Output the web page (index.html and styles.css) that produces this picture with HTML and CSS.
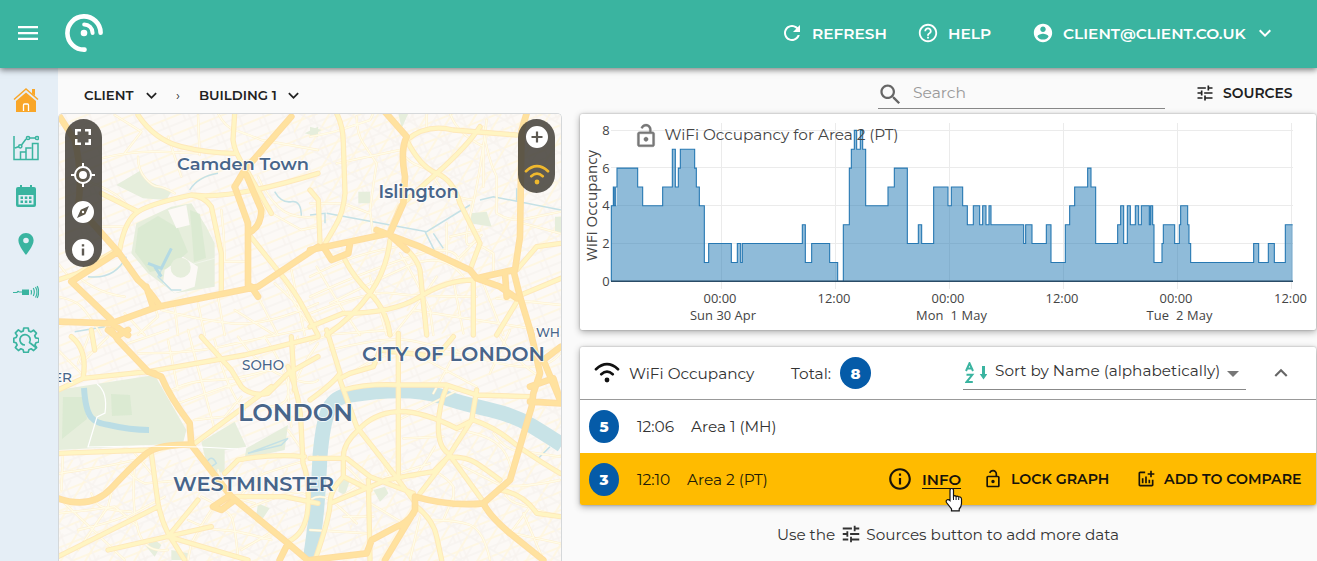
FILE: index.html
```html
<!DOCTYPE html>
<html lang="en">
<head>
<meta charset="utf-8">
<title>Building dashboard</title>
<link rel="stylesheet" href="styles.css">
</head>
<body>
<svg class="sprite" width="0" height="0">
  <symbol id="i-down" viewBox="0 0 24 24"><path d="M7.41 8.59 12 13.17l4.59-4.58L18 10l-6 6-6-6z"/></symbol>
  <symbol id="i-tune" viewBox="0 0 24 24"><path d="M3 17v2h6v-2H3zM3 5v2h10V5H3zm10 16v-2h8v-2h-8v-2h-2v6h2zM7 9v2H3v2h4v2h2V9H7zm14 4v-2H11v2h10zm-6-4h2V7h4V5h-4V3h-2v6z"/></symbol>
  <symbol id="i-lock" viewBox="0 0 24 24"><path d="M18 8h-1V6c0-2.760-2.240-5-5-5-2.300 0-4.200 1.500-4.800 3.500l1.900.6C9.500 3.900 10.600 3 12 3c1.660 0 3 1.340 3 3v2H6c-1.100 0-2 .9-2 2v10c0 1.100.9 2 2 2h12c1.100 0 2-.9 2-2V10c0-1.100-.9-2-2-2zm0 12H6V10h12v10zm-6-3c1.100 0 2-.9 2-2s-.9-2-2-2-2 .9-2 2 .9 2 2 2z"/></symbol>
  <symbol id="i-wifi" viewBox="0 0 26 22"><g fill="none" stroke="currentColor" stroke-width="2.700" stroke-linecap="round"><path d="M2 7.200Q13-2.800 24 7.200M7.300 12.200Q13 7 18.700 12.200"/></g><circle cx="13" cy="18" r="2.400"/></symbol>
</svg>

<header class="topbar">
  <svg class="menu" viewBox="0 0 20 14"><path d="M0 0h20v2.200H0zM0 6h20v2.200H0zM0 11.800h20V14H0z"/></svg>
  <svg class="logo" viewBox="0 0 38 38"><g fill="none" stroke="#fff" stroke-linecap="round"><path stroke-width="4.600" d="M19.500 35.600A16.600 16.600 0 1 1 35.600 18.700"/><path stroke-width="4" d="M19.200 10.500A8.400 8.400 0 0 1 27.600 18.900"/></g><circle cx="19" cy="19" r="3.300"/></svg>
  <nav class="account">
    <a class="top-link refresh"><svg viewBox="0 0 24 24"><path d="M17.650 6.350C16.200 4.900 14.210 4 12 4c-4.420 0-7.990 3.580-7.990 8s3.570 8 7.990 8c3.730 0 6.840-2.550 7.730-6h-2.080c-.82 2.330-3.040 4-5.650 4-3.310 0-6-2.690-6-6s2.690-6 6-6c1.660 0 3.140.69 4.220 1.780L13 11h7V4l-2.350 2.350z"/></svg><span>REFRESH</span></a>
    <a class="top-link help"><svg viewBox="0 0 24 24"><path d="M11 18h2v-2h-2v2zm1-16C6.480 2 2 6.480 2 12s4.480 10 10 10 10-4.480 10-10S17.520 2 12 2zm0 18c-4.410 0-8-3.590-8-8s3.590-8 8-8 8 3.590 8 8-3.590 8-8 8zm0-14c-2.210 0-4 1.790-4 4h2c0-1.100.9-2 2-2s2 .9 2 2c0 2-3 1.750-3 5h2c0-2.250 3-2.500 3-5 0-2.210-1.790-4-4-4z"/></svg><span>HELP</span></a>
    <a class="top-link user"><svg viewBox="0 0 24 24"><path d="M12 2C6.480 2 2 6.480 2 12s4.480 10 10 10 10-4.480 10-10S17.520 2 12 2zm0 3c1.660 0 3 1.340 3 3s-1.340 3-3 3-3-1.340-3-3 1.340-3 3-3zm0 14.200c-2.500 0-4.710-1.280-6-3.220.03-1.990 4-3.080 6-3.080 1.990 0 5.970 1.090 6 3.080-1.290 1.940-3.500 3.220-6 3.220z"/></svg><span>CLIENT@CLIENT.CO.UK</span><svg class="caret"><use href="#i-down"/></svg></a>
  </nav>
</header>

<div class="shell">
  <aside class="rail">
    <svg class="home" viewBox="0 0 26 26"><path d="M3 14 13 5.500 23 14v11H3z"/><path d="M1 12.500 13 2l12 10.500" fill="none" stroke="currentColor" stroke-width="1.500"/><path d="M19 2h3v7l-3-2.500z"/><path d="M10.500 24v-6q0-1 1-1h3q1 0 1 1v6" fill="none" stroke="#fff" stroke-width="1.300"/></svg>
    <svg viewBox="0 0 26 26"><g fill="none" stroke="currentColor" stroke-width="1.500"><path d="M1 1v23.500h24V8.500h-5.500v16M7.500 24V17H13v7M13 24V13h5.500M2 13l4-1.500M8.500 10 13 4M17 3h5"/><circle cx="7.300" cy="11.300" r="1.600"/><circle cx="15" cy="3" r="1.600"/><circle cx="24" cy="3" r="1.600"/></g></svg>
    <svg viewBox="0 0 26 26"><path d="M5 4h2V2h2v2h8V2h2v2h2q2 0 2 2v4H3V6q0-2 2-2z"/><path fill-rule="evenodd" d="M3 9.500h20V22q0 2-2 2H5q-2 0-2-2zm2.500 2.500v9.500h15V12z"/><path d="M7.500 13.500H10V16H7.500zM11.800 13.500h2.500V16h-2.500zM16 13.500h2.500V16H16zM7.500 17.500H10V20H7.500zM11.800 17.500h2.500V20h-2.500zM16 17.500h2.500V20H16z"/></svg>
    <svg viewBox="0 0 26 26"><path fill-rule="evenodd" d="M13 2c-4.300 0-7.600 3.400-7.600 7.500C5.400 15 13 24 13 24s7.600-9 7.600-14.500C20.600 5.400 17.300 2 13 2zm0 4.700a2.800 2.800 0 1 1 0 5.600 2.800 2.800 0 0 1 0-5.600z"/></svg>
    <svg viewBox="0 0 26 26"><path d="M9 10.500h7v5.500H9z"/><g fill="none" stroke="currentColor" stroke-width="1.200"><path d="M0 13.500h4q1-2 2-.5h4M18 11q1 2 0 4.500M20.300 9q2 4 0 8M22.500 8q3 5 0 10.500M24.200 7q3 6 0 12"/></g></svg>
    <svg viewBox="0 0 26 26"><g fill="none" stroke="currentColor" stroke-width="1.700" stroke-linejoin="round"><path d="M10.800 1h4.400l.6 3 2.200.9 2.500-1.700 2.900 3-1.700 2.500.9 2.100 3.300.7v3.500l-3 .8-1 2.300 1.700 2.500-3 2.900-2.500-1.700-2.200.9-.7 2.700h-4.400l-.7-2.700-2.200-.9-2.500 1.700-3-2.900 1.700-2.500-1-2.300-2.300-.6v-4l2.400-.7.9-2.100-1.700-2.500 3-3L8 4.900l2.200-.9z"/><path d="m23.500 21-7-5.500A5.200 5.200 0 1 0 12 18"/></g></svg>
  </aside>

  <main>
    <div class="toolbar">
      <div class="crumb client"><span>CLIENT</span><svg><use href="#i-down"/></svg></div>
      <span class="sep">›</span>
      <div class="crumb building"><span>BUILDING 1</span><svg><use href="#i-down"/></svg></div>
      <div class="search"><svg viewBox="0 0 24 24"><path d="M15.500 14h-.79l-.28-.27C15.410 12.590 16 11.110 16 9.500 16 5.910 13.090 3 9.500 3S3 5.910 3 9.500 5.910 16 9.500 16c1.610 0 3.090-.59 4.230-1.570l.27.28v.79l5 4.990L20.490 19l-4.990-5zm-6 0C7.010 14 5 11.990 5 9.500S7.010 5 9.500 5 14 7.010 14 9.500 11.990 14 9.500 14z"/></svg><span>Search</span></div>
      <div class="sources"><svg><use href="#i-tune"/></svg><span>SOURCES</span></div>
    </div>

    <div class="content">
      <section class="map">
        <svg class="map-art" viewBox="58 114 504 447">
          <defs>
            <pattern id="streets-a" width="23" height="17" patternUnits="userSpaceOnUse" patternTransform="rotate(-22)"><path class="street-y" d="M0 3h23"/><path class="street-g" d="M0 11h23M17 0v17M12 3v8"/></pattern>
            <pattern id="streets-b" width="21" height="25" patternUnits="userSpaceOnUse" patternTransform="rotate(31)"><path class="street-y" d="M5 0v25"/><path class="street-g" d="M0 18h21M14 0v18"/></pattern>
            <g id="minor">
              <g transform="translate(58 110) scale(.33333)">
                <path d="M130 145Q220 122 300 125T420 130M240 140Q240 180 262 205T300 230 350 250M40 200Q100 215 150 240T230 315M0 460l45 55M170 15l80 50M250 65 200 130M330 80l40 120M420 15l5 120M480 10Q500 50 530 60T610 90L780 120M600 200Q620 250 660 290T780 320M640 310l90 50 50-10M560 330Q565 360 580 380T640 460 700 560 780 670M620 310l-10-80M490 300Q500 380 500 455L570 455M280 560 300 620 240 675M350 590 360 675M420 580 440 675M480 560l20 115M200 610l60 65M310 600Q420 630 520 640T780 580M60 500Q120 550 200 560M0 560Q50 570 70 590T130 675M530 600l120 75M600 560l60 115M650 520 780 640M700 480l40 195M100 350 210 350"/>
              </g>
              <g transform="translate(310 110) scale(.33333)">
                <path d="M0 80Q60 70 90 60T180 30L190 10M140 20Q140 70 160 100T200 160Q190 220 180 300L190 380M80 160 270 120M350 10v50M420 10Q440 70 520 110V230M520 50Q530 140 560 200V310Q590 330 630 330L753 305M0 280H100L180 310M270 120Q290 150 310 160T360 180Q380 220 400 240T490 270M530 30Q510 200 480 320T500 390 430 460M640 340l110 30M410 340V440L500 500M420 380l90-20M500 400l50 30v60M0 500Q60 470 110 450T260 410M0 560Q150 490 300 440T450 470M60 580Q180 520 290 470T460 500M20 470Q70 560 150 675M180 500 230 675M270 430Q320 510 360 600L370 675M0 610Q180 540 250 550T500 560M430 510l30 160M520 520l60 155M380 500Q320 590 250 675M560 565l193 20M310 600l380 60"/>
              </g>
              <g transform="translate(58 330) scale(.33333)">
                <path d="M0 60 80 140M100 0 60 100M150 20l-80 80M210 40 330 0M240 70Q400 70 490 50T780-10M330 30l30 150M400 40 440 190M470 30Q490 120 520 180T560 240M340 180Q400 150 470 150T670 110M360 220l200-70M390 0l80 300M540 20Q600 110 680 140T780 150M620 20Q680 110 690 170T630 230M410 270l90-10 50-60M720 20Q690 100 690 190L700 290M780 40Q720 120 700 190M690 300l50 70M15 370 10 480M0 430Q160 410 270 380M230 370l50 60M200 410Q230 450 260 460L380 450M100 490Q110 520 130 530T220 545M160 490 150 530 60 660M0 550Q100 540 170 530L240 590M20 520l180 170M60 600Q150 580 200 560M230 400Q220 530 240 600T330 660M320 500l-110 60M430 500Q510 540 520 560T540 680M390 570Q450 600 490 600T640 630M460 540Q420 600 400 640L390 690M540 510Q590 440 620 430T780 380M560 540Q650 500 700 490T760 520M650 600l-100 60M480 420Q500 490 520 500L590 520"/>
              </g>
              <g transform="translate(310 330) scale(.33333)">
                <path d="M0 40Q50 10 100 10L240 0M60 60Q220 20 290 30T530 90 750 70M120 130Q200 80 250 70T670 90M350 90l150 80M440 60 370 190M600 0l-60 130M570 20Q620 100 690 140M280 325l120-5M265 270l180-90M440 300Q520 310 560 340T610 450M550 310Q580 350 610 360L750 380M375 350Q340 410 315 440H255M370 420Q420 450 430 470V530M420 390Q520 440 560 460T750 450M100 400l60 60-100 60M210 370Q230 430 250 450T320 510M100 560h90M200 450l160-50M360 570Q440 570 480 585T540 690M400 570l30-70M580 480Q590 510 620 520T750 560M550 560Q590 600 610 610L750 640M660 530l-60 80M640 550l60 140M0 510Q30 490 60 510T140 580M180 520l100 60M0 600l180 10M330 560l-30 130"/>
              </g>
            </g>
            <g id="major">
              <g transform="translate(58 110) scale(.33333)">
                <path d="M185 420Q200 330 240 305T400 255Q440 260 460 290L490 430 490 545M240 15Q290 90 370 110T530 130M530 10 525 90Q530 130 560 170M560 170 640 310M400 255Q520 270 780 190M240 305 130 250M0 510 60 490 175 420M570 370 650 470Q710 540 740 600L780 675"/>
              </g>
              <g transform="translate(310 110) scale(.33333)">
                <path d="M80 10Q100 50 100 100L105 250Q100 310 75 350L40 410M290 90Q350 40 430 60L620 75M510 50Q470 110 380 190T270 290L240 360M290 90Q330 170 380 190T450 280L510 400 480 480M0 240 25 270 30 400M105 450Q130 500 180 550T240 675M490 510Q410 510 330 560T100 610L0 650M240 390Q230 480 180 550T50 675M270 400Q320 440 330 480L350 675M630 560 560 675M620 480 680 410 753 400M620 560 753 505M490 510v165"/>
              </g>
              <g transform="translate(58 330) scale(.33333)">
                <path d="M0 180 75 145 270 125 560 75 780 20M40 20Q90 60 75 145M430 20 520 120 550 170Q580 200 630 190L690 130 780 80M0 370 270 360 400 340M280 370 300 520Q310 570 330 610L380 690M410 340 640 170M500 430 540 390Q640 370 740 380M690 110Q730 210 730 300L735 400Q755 450 750 530T690 635M0 680 300 530M150 660 460 590M520 500H680L780 520M330 620 570 690M100 0 110 60M700 20 710 180M420 510 330 620"/>
              </g>
              <g transform="translate(310 330) scale(.33333)">
                <path d="M50 0 90 130Q70 160 0 210M90 150 140 290 250 430 310 510M90 145 120 130 190 110 210 60 380 80 430 20M100 180Q170 160 270 165L410 165 500 195 660 200M265 10v430M410 170Q385 230 385 290T415 370L520 515M500 180 485 270 415 380 330 490M145 300Q190 250 260 245T440 295L490 270Q550 290 600 330T750 430M145 300Q100 340 100 380V440Q60 480 60 520T15 690M0 385H110L180 440M180 440 310 490M175 450 180 690M60 520 230 450Q330 430 370 425L415 380Q470 380 500 400T570 450M570 480Q640 490 680 550L753 560M320 530Q370 570 380 620L395 690M100 440 180 480"/>
              </g>
            </g>
            <g id="trunk">
              <g transform="translate(58 110) scale(.33333)">
                <path d="M5 20 50 90Q75 190 60 290L180 425 240 510Q265 530 300 580M180 425 40 515 160 630M0 635 160 640 300 590 600 530 780 410M700 20 560 180 530 230M530 230 570 340V525M565 195 610 300Q610 350 570 370M160 640 210 675M600 560 580 530M265 530 285 590"/>
              </g>
              <g transform="translate(310 110) scale(.33333)">
                <path d="M220 0 290 80Q270 120 285 200L280 280 240 370 0 420M250 380 330 410 480 480 500 505 610 480 630 560 665 675M200 360 240 375 290 420M650 10 635 60 630 380 615 480M40 410 65 450 115 430 120 400M500 505 570 530 620 565M585 490 590 560"/>
              </g>
              <g transform="translate(58 330) scale(.33333)">
                <path d="M160 0 180 30 270 125 310 140Q335 200 395 280L400 345Q300 340 260 375T160 475 0 505M270 125 290 130M400 345 520 500 690 640 760 700M510 500 465 530 490 540 530 510M690 640 665 690M150 0 175 20 210 0"/>
              </g>
              <g transform="translate(310 330) scale(.33333)">
                <path d="M660 0 670 40 690 130 670 190 665 230 600 450 520 520Q420 530 315 500V540L225 690M520 520Q540 560 600 610L700 690M660 170 730 145 753 220 660 215M700 90 750 210M700 90 753 50M310 550Q290 580 260 590L185 630 170 670 0 690"/>
              </g>
            </g>
          </defs>
          <path class="land" d="M58 114h504v447H58z"/>
          <path fill="url(#streets-a)" d="M58 114h504v447H58z"/>
          <path fill="url(#streets-b)" d="M290 114h272v120l-120 100-120-80zM58 460h230v101H58zM350 460l212-60v161H350z"/>
          <g class="park">
            <g transform="translate(58 110) scale(.33333)">
              <path d="M175 225 250 180 265 210 340 245 325 270 255 265zM235 340 340 290 400 280 445 350 470 400 470 530 350 550 270 490 220 430zM740 70 780 50V80z"/>
            </g>
            <g transform="translate(310 110) scale(.33333)"><path d="M0 50 35 60 0 80zM265 10h30l-20 45zM145 245h35v35h-35zM480 310l50-5 15 45-65-10zM735 320h20v50h-20z"/></g>
            <g transform="translate(58 330) scale(.33333)"><path d="M0 180 290 135 385 300 375 340 0 360zM430 335 530 275 565 350 500 360 500 430 450 420zM565 355 690 285 680 360 560 385zM600 520l35 15-20 30-20-10zM265 650l20-25 25 20-20 35zM340 660l50 10-5 20h-45z"/></g>
            <g transform="translate(310 330) scale(.33333)"><path d="M90 440l30 10-15 45-20-10zM190 480l35-10 10 20-25 25z"/></g>
          </g>
          <g class="park-dark"><path d="M138 228l20-12 20 12 10 24-18 16-20 4-15-20zM190 210l10 4 6 44-12 4zM63 397l20 0 4 22-25 20M111 394l19 1 2 20-20 1z"/></g>
          <g transform="translate(58 110) scale(.33333)"><path class="land" d="M330 300l55-15 10 60-40 10zM320 480l55-40 45 30-10 60-60 20-35-30z"/><circle class="park-fill" cx="368" cy="473" r="30"/><path class="path" d="M395 465 470 445"/></g>
          <g class="water-line">
            <g transform="translate(58 110) scale(.33333)"><path d="M395 240Q420 200 480 190M650 245Q670 280 700 275T730 320M90 500Q170 510 205 440M310 480 300 500 340 540 370 540M50 665l90-15"/><path class="lake" d="M270 460 310 475 340 415M290 470 310 500"/></g>
            <g transform="translate(310 110) scale(.33333)"><path d="M0 315 45 310 45 340M50 310 350 365 480 285M345 365l30 60M370 370l30 45M510 270l40-10 203 40M620 275l0-40"/></g>
            <g transform="translate(58 330) scale(.33333)"><path d="M570 370 690 325 670 345zM445 400Q460 370 475 400L460 410"/></g>
            <g transform="translate(310 330) scale(.33333)"><path d="M680 390 720 350"/></g>
          </g>
          <path class="serpentine" d="M84 388C86 420 93 422 109 425Q130 430 149 430"/>
          <path class="thames" d="M310 561C316 523 318 500 320 456C324 410 330 397 350 395C394 388 421 390 440 396C482 411 502 408 532 426Q550 437 562 445"/>
          <use href="#minor" class="minor-case"/><use href="#minor" class="minor-fill"/>
          <use href="#major" class="major-case"/><use href="#major" class="major-fill"/>
          <use href="#trunk" class="trunk-case"/><use href="#trunk" class="trunk-fill"/>
          <path class="path" d="M97 384Q108 392 105 413L97 417 88 447 140 446 200 447 238 449"/>
          <g class="labels">
            <text x="177" y="170" font-size="17" textLength="132" lengthAdjust="spacingAndGlyphs">Camden Town</text>
            <text x="378.500" y="198" font-size="17.500" textLength="80" lengthAdjust="spacingAndGlyphs">Islington</text>
            <text x="362" y="360.500" font-size="20.500" textLength="183" lengthAdjust="spacingAndGlyphs">CITY OF LONDON</text>
            <text x="238" y="421" font-size="24" textLength="115" lengthAdjust="spacingAndGlyphs">LONDON</text>
            <text x="173" y="491" font-size="21" textLength="161" lengthAdjust="spacingAndGlyphs">WESTMINSTER</text>
            <text class="small" x="242" y="369.500" font-size="14" textLength="42" lengthAdjust="spacingAndGlyphs">SOHO</text>
            <text class="small" x="53" y="381.500" font-size="13.500" textLength="19" lengthAdjust="spacingAndGlyphs">ER</text>
            <text class="small" x="536" y="337" font-size="13.500" textLength="24" lengthAdjust="spacingAndGlyphs">WH</text>
          </g>
        </svg>
        <div class="pill pill-left">
          <svg viewBox="0 0 24 24"><path d="M4 4h6v2.500H6.500V10H4zM14 4h6v6h-2.500V6.500H14zM4 14h2.500v3.500H10V20H4zM17.500 14H20v6h-6v-2.500h3.500z"/></svg>
          <svg viewBox="0 0 24 24"><path d="M12 8a4 4 0 1 0 0 8 4 4 0 0 0 0-8zm8.940 3A8.994 8.994 0 0 0 13 3.060V0h-2v3.060A8.994 8.994 0 0 0 3.060 11H0v2h3.060A8.994 8.994 0 0 0 11 20.940V24h2v-3.060A8.994 8.994 0 0 0 20.940 13H24v-2h-3.060zM12 19a7 7 0 1 1 0-14 7 7 0 0 1 0 14z"/></svg>
          <svg viewBox="0 0 24 24"><path fill-rule="evenodd" d="M12 1a11 11 0 1 0 0 22 11 11 0 0 0 0-22zm2.300 13.200L6 18l3.700-8.200L18 6zM12 10.800a1.200 1.200 0 1 0 0 2.400 1.200 1.200 0 0 0 0-2.400z"/></svg>
          <svg viewBox="0 0 24 24"><path fill-rule="evenodd" d="M12 1a11 11 0 1 0 0 22 11 11 0 0 0 0-22zm1.200 16.500h-2.400v-7h2.400zm0-9h-2.400V6.200h2.400z"/></svg>
        </div>
        <div class="pill pill-right">
          <svg viewBox="0 0 24 24"><path fill-rule="evenodd" d="M12 1a11 11 0 1 0 0 22 11 11 0 0 0 0-22zm5.500 12h-4.400v4.500h-2.200V13H6.500v-2.100h4.400V6.500h2.200v4.400h4.400z"/></svg>
          <svg class="pill-wifi"><use href="#i-wifi"/></svg>
        </div>
      </section>

      <section class="panel">
        <div class="card chart">
          <svg viewBox="580 114 736 216">
            <path class="grid" d="M611 130.500h682M611 167.500h682M611 205.500h682M611 243.500h682M721.500 123v166M835.500 123v166M949.500 123v166M1063.500 123v166M1177.500 123v166M1291.500 123v166"/>
            <g transform="translate(575 281.300) scale(.33333 -18.870)">
              <path class="area" vector-effect="non-scaling-stroke" d="M109 0V4H115V5H118V4H122V5H126V6H188V5H203V4H263V5H292V7H301V5H310V6H316V7H359V6H364V5H373V4H388V1H401V2H469V1H487V2H497V1H502V2H682V3H691V1H710V2H764V1H788V0H805V3H823V6H829V7H838V8H845V7H856V8H863V7H872V4H939V5H958V6H997V2H1030V3H1040V2H1076V5H1119V4H1129V5H1163V4H1177V3H1195V4H1214V3H1223V4H1233V3H1242V4H1248V3H1346V2H1352V3H1371V2H1414V3H1428V1H1471V3H1484V4H1499V5H1538V6H1548V5H1562V2H1628V3H1637V4H1646V2H1657V4H1666V3H1681V4H1691V3H1699V4H1723V3H1727V4H1733V3H1737V1H1761V2H1765V3H1799V2H1813V3H1817V4H1838V3H1842V2H1847V1H2036V2H2051V1H2080V2H2098V1H2131V3H2153"/>
              <path class="area-fill" d="M109 0V4H126V6H188V5H203V4H263V5H292V7H301V5H310V6H316V7H359V6H364V5H373V4H388V1H401V2H469V1H487V2H497V1H502V2H682V3H691V1H710V2H764V1H788V0H805V3H823V6H829V7H838V8H845V7H856V8H863V7H872V4H939V5H958V6H997V2H1030V3H1040V2H1076V5H1119V4H1129V5H1163V4H1177V3H1195V4H1214V3H1223V4H1233V3H1242V4H1248V3H1346V2H1352V3H1371V2H1414V3H1428V1H1471V3H1484V4H1499V5H1538V6H1548V5H1562V2H1628V3H1637V4H1646V2H1657V4H1666V3H1681V4H1691V3H1699V4H1733V3H1737V1H1761V2H1765V3H1799V2H1813V3H1817V4H1838V3H1842V2H1847V1H2036V2H2051V1H2080V2H2098V1H2131V3H2153V0z"/>
            </g>
            <path class="axis" d="M611 281.300h682"/>
            <g class="tick y"><text x="609.500" y="135">8</text><text x="609.500" y="172.500">6</text><text x="609.500" y="210">4</text><text x="609.500" y="248">2</text><text x="609.500" y="286">0</text></g>
            <g class="tick x"><text x="720" y="303">00:00</text><text x="834" y="303">12:00</text><text x="948" y="303">00:00</text><text x="1062" y="303">12:00</text><text x="1176" y="303">00:00</text><text x="1290.500" y="303">12:00</text>
            <text x="723" y="320" textLength="66">Sun 30 Apr</text><text x="951.500" y="320" textLength="71" xml:space="preserve">Mon  1 May</text><text x="1179.500" y="320" textLength="66" xml:space="preserve">Tue  2 May</text></g>
            <text class="y-title" transform="translate(597 205.500) rotate(-90)" textLength="111">WiFi Occupancy</text>
            <text class="chart-title" x="664.500" y="140" textLength="234">WiFi Occupancy for Area 2 (PT)</text>
            <use class="chart-lock" href="#i-lock" x="633" y="123" width="26" height="26"/>
          </svg>
        </div>

        <div class="card list">
          <div class="list-head">
            <svg class="head-wifi"><use href="#i-wifi"/></svg>
            <span class="head-name">WiFi Occupancy</span><span class="head-total">Total:</span><b class="count">8</b>
            <div class="sort">
              <svg class="az" viewBox="0 0 22 22"><g fill="none" stroke="currentColor" stroke-width="2"><path d="M1 9 4.500 1.200 8 9M2.200 6.500h4.600M1.500 12.800h5.800L1.500 20h6.300"/></g><path d="M17 4h3v8h2.300l-3.800 5.500L14.700 12H17z"/></svg>
              <span>Sort by Name (alphabetically)</span><i class="triangle"></i>
            </div>
            <svg class="collapse" viewBox="0 0 24 24"><path d="m12 8-6 6 1.410 1.410L12 10.830l4.590 4.580L18 14z"/></svg>
          </div>
          <div class="row"><b class="count">5</b><span class="time">12:06</span><span class="area-name">Area 1 (MH)</span></div>
          <div class="row selected"><b class="count">3</b><span class="time t2">12:10</span><span class="area-name">Area 2 (PT)</span>
            <div class="actions">
              <svg class="info-icon" viewBox="0 0 24 24"><path d="M11 7h2v2h-2zm0 4h2v6h-2zm1-9C6.480 2 2 6.480 2 12s4.480 10 10 10 10-4.480 10-10S17.520 2 12 2zm0 18c-4.410 0-8-3.590-8-8s3.590-8 8-8 8 3.590 8 8-3.590 8-8 8z"/></svg>
              <span class="info"><u>INFO</u></span>
              <svg class="lock-icon"><use href="#i-lock"/></svg><span class="lock">LOCK GRAPH</span>
              <svg class="add-icon" viewBox="0 0 24 24"><path d="M22 5v2h-3v3h-2V7h-3V5h3V2h2v3zM19 19H5V5h6V3H5c-1.100 0-2 .9-2 2v14c0 1.100.9 2 2 2h14c1.100 0 2-.9 2-2v-6h-2zm-4-6v4h2v-4zm-4 4h2V9h-2zm-2 0v-6H7v6z"/></svg><span class="compare">ADD TO COMPARE</span>
            </div>
            <svg class="cursor" viewBox="0 0 18 24"><path d="M5 13V3q0-2 1.800-2T8.500 3v6q1.200-1.600 2.600 0 1.200-1 2.500.5 2.600-.7 2.900 2V16q0 3-2.300 5.500v1.800H6.500v-1.800L1.500 15q-1-2 1-2.800Q4 12 5 13z" fill="#fff" stroke="#111" stroke-width="1.200"/><path d="M8.500 9v3.500M11.100 9.500v3M13.700 10v2.500" stroke="#111"/></svg>
          </div>
        </div>
        <p class="hint"><span>Use the</span><svg><use href="#i-tune"/></svg><span>Sources button to add more data</span></p>
      </section>
    </div>
  </main>
</div>
</body>
</html>
```

FILE: styles.css
```css
* { box-sizing: border-box; }
body { margin: 0; width: 1317px; height: 561px; overflow: hidden; background: #fafafa; color: #212121; font-family: Montserrat, Inter, "Open Sans", sans-serif; font-size: 15.4px; display: flex; flex-direction: column; }
svg { display: block; flex: none; fill: currentColor; }
span { white-space: nowrap; flex: none; }
.sprite { position: absolute; }

.topbar { height: 68px; flex: none; background: #3ab4a0; color: #fff; display: flex; align-items: center; box-shadow: 0 2px 6px rgba(0,0,0,.5); z-index: 3; padding: 0 45px 2px 18px; }
.menu { width: 20px; height: 14px; }
.logo { width: 38px; height: 38px; margin-left: 27px; }
.account { margin-left: auto; display: flex; align-items: center; }
.top-link { display: flex; align-items: center; font-weight: 600; font-size: 15.35px; }
.top-link svg { width: 22px; height: 22px; margin-right: 9px; }
.top-link.refresh svg { width: 24px; height: 24px; margin-right: 8px; }
.refresh { width: 137px; }
.help { width: 115px; }
.top-link.user .caret { width: 24px; height: 24px; margin: 0 -5px 0 0; }
.user span { width: 190px; }

.shell { flex: 1; display: flex; min-height: 0; }
.rail { width: 58px; background: #e5eef6; color: #3ab4a0; display: flex; flex-direction: column; align-items: center; gap: 22px; padding: 19px 6px 0 0; flex: none; }
.rail svg { width: 26px; height: 26px; }
.rail .home { color: #f9a628; }

main { flex: 1; min-width: 0; }
.toolbar { height: 45px; padding: 9px 22px 0 26px; display: flex; align-items: center; font-size: 13.3px; }
.crumb { display: flex; align-items: center; font-weight: 600; }
.crumb svg { width: 21px; height: 21px; margin: 0 -1px 0 auto; }
.client { width: 77px; }
.sep { margin: 0 17px 0 15px; width: 6px; }
.building { width: 104px; }
.search { width: 287px; height: 33px; margin: -5px 32px 0 575px; border-bottom: 1px solid #888; display: flex; align-items: center; color: #999; font-size: 15.5px; flex: none; }
.search svg { width: 27px; height: 27px; color: #666; margin: 5px 9px 0 -1px; }
.search span { padding-top: 1px; }
.sources { display: flex; align-items: center; font-weight: 600; font-size: 13.9px; margin-top: -5px; }
.sources svg { width: 20px; height: 20px; margin: 0 8px 0 -2px; }

.content { display: flex; gap: 18px; height: 448px; }
.map { width: 504px; height: 448px; position: relative; border: 1px solid #d5d8da; border-bottom: 0; border-radius: 5px 5px 0 0; overflow: hidden; flex: none; }
.map-art { width: 504px; height: 447px; margin-left: -1px; }
.land { fill: #fcf9f6; }
.street-y { stroke: #fff7df; stroke-width: 1.6; fill: none; }
.street-g { stroke: #f8f3ef; stroke-width: 1.3; fill: none; }
.park, .park-fill { fill: #e6eedc; }
.park-dark { fill: #d8e9cf; opacity: .8; }
.path { fill: none; stroke: #fff; stroke-width: 1.2; }
.water-line { fill: none; stroke: #c4e1e6; stroke-width: 4.5; }
.lake { stroke: #b4dae4; stroke-width: 9; }
.serpentine { fill: none; stroke: #bbdde5; stroke-width: 6; }
.thames { fill: none; stroke: #c8e3e7; stroke-width: 15; }
.minor-case, .minor-fill, .major-case, .major-fill, .trunk-case, .trunk-fill { fill: none; stroke-linejoin: round; stroke-linecap: round; }
.minor-case { stroke: #feefcf; stroke-width: 7; }
.minor-fill { stroke: #fffce8; stroke-width: 4; }
.major-case { stroke: #fee8ba; stroke-width: 16; }
.major-fill { stroke: #fff5c3; stroke-width: 10.5; }
.trunk-case { stroke: #fedda0; stroke-width: 20; }
.trunk-fill { stroke: #ffe29f; stroke-width: 14; }
.labels { fill: #48658a; font-weight: 650; paint-order: stroke; stroke: rgba(255,255,255,.75); stroke-width: 2px; }
.labels .small { font-weight: 500; }
.pill { position: absolute; top: 5px; width: 37px; border-radius: 19px; background: rgba(67,64,57,.86); color: #fff; display: flex; flex-direction: column; align-items: center; }
.pill svg { width: 24px; height: 24px; }
.pill-left { left: 6px; height: 148px; gap: 13.5px; padding: 6px 2px 0 0; }
.pill-right { left: 459px; height: 74px; gap: 15px; padding-top: 6px; }
.pill .pill-wifi { width: 26px; height: 22px; color: #efb82d; }

.panel { width: 736px; padding-top: 1px; flex: none; }
.card { background: #fff; box-shadow: 0 2px 7px rgba(0,0,0,.32), 0 0 2px rgba(0,0,0,.3); border-radius: 2px; }
.chart { height: 216px; margin-bottom: 17px; }
.chart svg { width: 736px; height: 216px; }
.grid { stroke: #ebebeb; fill: none; }
.area { fill: none; stroke: #2a79b2; stroke-width: 1.1; }
.area-fill { fill: #1f77b4; fill-opacity: .5; }
.axis { stroke: #294b66; stroke-width: 1.6; }
.tick { font: 12.9px "Open Sans", sans-serif; fill: #444; }
.tick.y { text-anchor: end; }
.tick.x, .y-title { text-anchor: middle; }
.y-title { font: 15px "Open Sans", sans-serif; fill: #444; }
.chart-title { font-size: 15.3px; fill: #444; }
.chart-lock { color: #777; stroke: #777; stroke-width: .3px; }

.list { height: 158px; }
.list-head { height: 53px; border-bottom: 1px solid #999; display: flex; align-items: center; padding: 0 23px 0 14px; color: #333; }
.head-wifi { width: 26px; height: 22px; margin-right: 9px; color: #111; }
.head-name { width: 162px; font-size: 15.3px; }
.head-total { width: 49px; }
.count { width: 31px; height: 32px; border-radius: 50%; background: #055ba8; color: #fff; display: flex; align-items: center; justify-content: center; font-weight: 800; font-size: 15px; flex: none; }
.sort { margin-left: 92px; width: 283px; height: 32px; border-bottom: 1px solid #888; display: flex; align-items: center; padding-bottom: 3px; margin-top: 2px; }
.az { width: 22px; height: 22px; color: #3ab4a0; margin: 2px 8px 0 2px; }
.sort span { width: 233px; padding-bottom: 3px; font-size: 15.25px; }
.triangle { border: 6px solid transparent; border-top-color: #777; border-bottom: 0; margin: 4px 0 0 -1px; }
.collapse { width: 26px; height: 26px; margin-left: auto; margin-right: -1px; color: #666; }
.row { height: 53px; display: flex; align-items: center; padding-left: 9px; position: relative; color: #333; }
.row .count { width: 30px; height: 33px; }
.time { margin-left: 18px; width: 54px; }
.t2 { width: 50px; }
.area-name { font-size: 15.3px; }
.selected { background: #ffbb00; height: 52px; color: #201a08; border-radius: 0 0 2px 2px; }
.actions { display: flex; align-items: center; margin-left: auto; padding-right: 14px; font-weight: 600; font-size: 14.2px; color: #17130a; }
.info-icon { width: 26px; height: 26px; margin-right: 9px; }
.info { width: 61px; font-size: 15px; }
.info u { text-underline-offset: 3px; }
.lock-icon { width: 20px; height: 20px; margin-right: 8px; }
.lock { width: 125px; }
.add-icon { width: 20px; height: 20px; margin-right: 8px; }
.compare { width: 138px; }
.cursor { position: absolute; left: 365px; top: 34px; width: 18px; height: 25px; z-index: 2; }
.hint { margin: 18px 0 0; display: flex; align-items: center; justify-content: center; color: #333; font-size: 15.25px; }
.hint svg { width: 22px; height: 22px; margin: 0 4px 0 5px; }
```
